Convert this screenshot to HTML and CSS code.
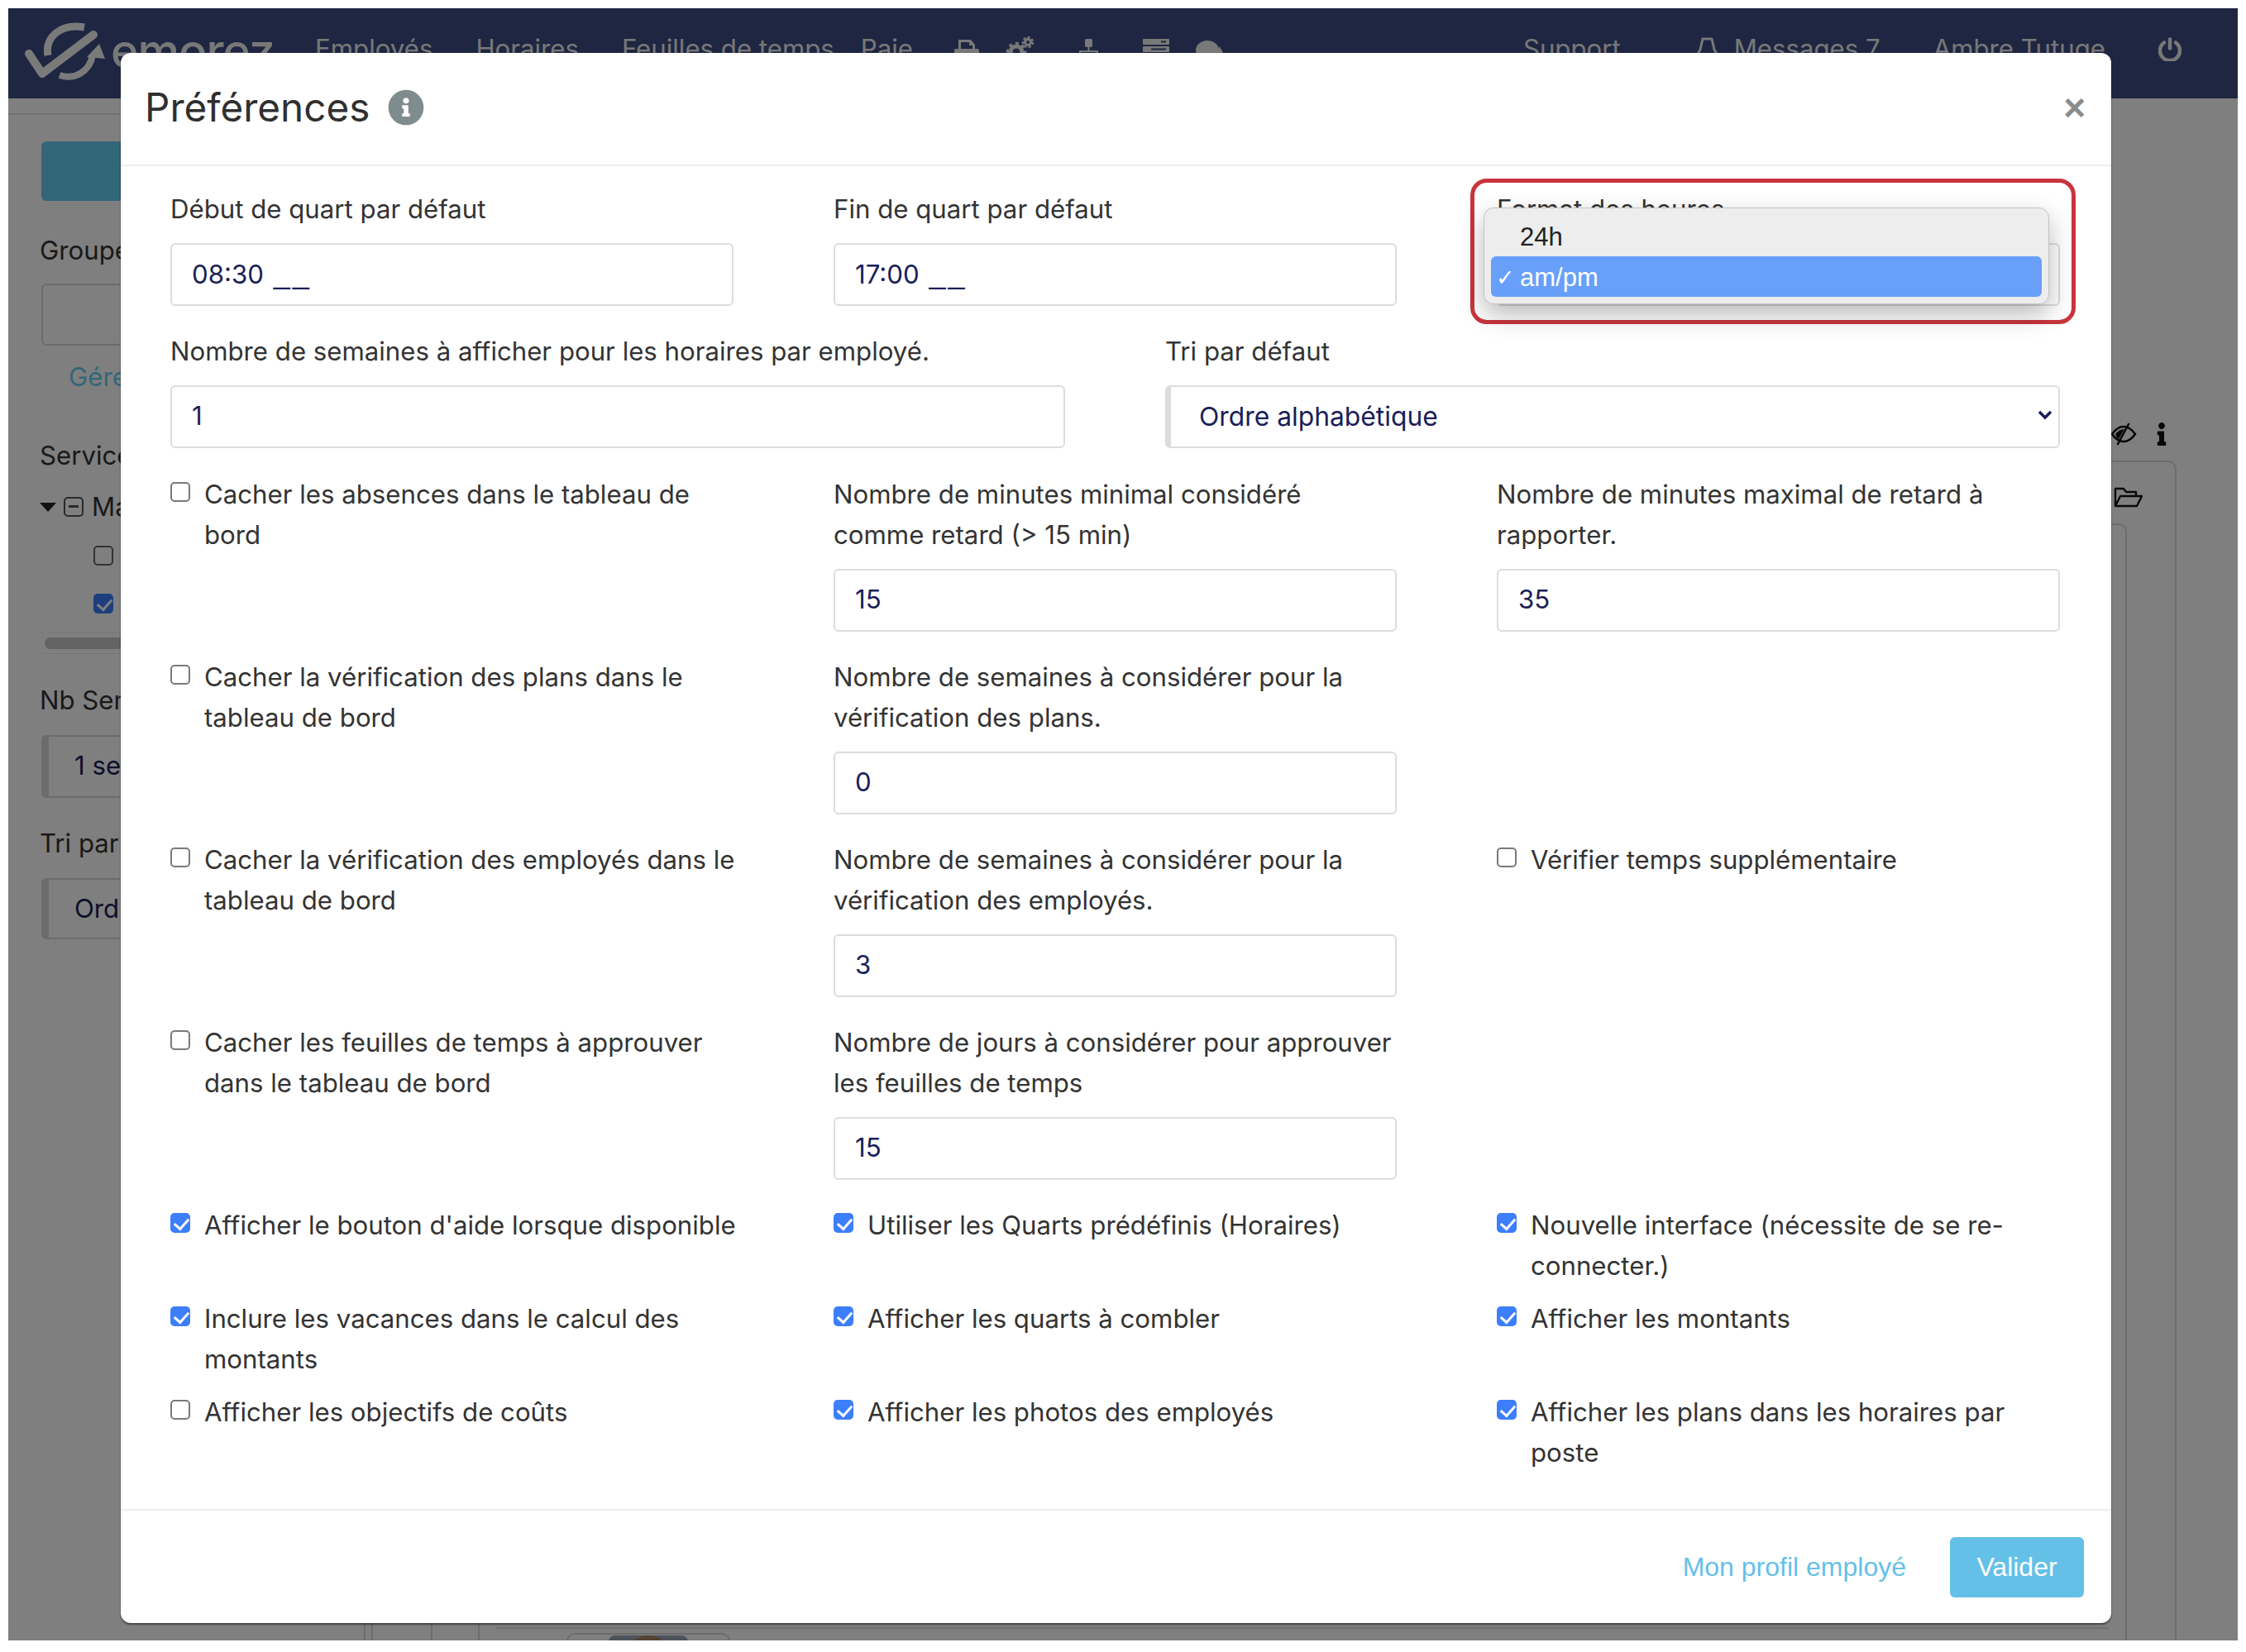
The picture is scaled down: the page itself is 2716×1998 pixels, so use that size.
FILE: index.html
```html
<!DOCTYPE html>
<html lang="fr">
<head>
<meta charset="utf-8">
<title>Préférences</title>
<link rel="stylesheet" href="styles.css">
</head>
<body>
<div class="app">
  <header class="navbar">
    <div class="brand">
      <svg class="logo" viewBox="0 0 100 74" fill="none" stroke="#f4f4f4" stroke-linecap="round" stroke-linejoin="round">
        <path d="M7 40 L23 64 L85 17" stroke-width="10"/>
        <path d="M30 42 C26 20 45 3 74 8" stroke-width="9" stroke-linecap="butt"/>
        <path d="M44 66 C62 72 80 62 84 42" stroke-width="8" stroke-linecap="butt"/>
        <path d="M77 44 L92 28 L99 46z" fill="#f4f4f4" stroke="none"/>
      </svg>
      <span class="brand-name">emorez</span>
    </div>
    <nav class="nav-main">
      <a class="nav-link">Employés</a>
      <a class="nav-link">Horaires</a>
      <a class="nav-link">Feuilles de temps</a>
      <a class="nav-link nav-paie">Paie</a>
      <span class="nav-icons">
        <svg class="ic-print" viewBox="0 0 30 28" fill="#f0f0f0"><path d="M5 12V1h15l5 6v5h-3V8h-4V4H8v8z"/><path d="M2 12h26a2 2 0 0 1 2 2v12H0V14a2 2 0 0 1 2-2z"/></svg>
        <svg class="ic-gears" viewBox="0 0 35 30" fill="none" stroke="#f0f0f0">
          <circle cx="13" cy="19" r="7" stroke-width="5"/><circle cx="13" cy="19" r="10.5" stroke-width="3.5" stroke-dasharray="4 4"/>
          <circle cx="27" cy="7" r="3.5" stroke-width="3"/><circle cx="27" cy="7" r="6" stroke-width="2.4" stroke-dasharray="3 2.4"/>
        </svg>
        <svg class="ic-site" viewBox="0 0 25 30" fill="#f0f0f0"><rect x="8" y="0" width="9" height="10" rx="2"/><rect x="11.5" y="10" width="2" height="5"/><rect x="2" y="14" width="21" height="2"/><rect x="1" y="14" width="2" height="12"/><rect x="22" y="14" width="2" height="12"/></svg>
        <svg class="ic-server" viewBox="0 0 32 30" fill="#f0f0f0"><path d="M1 0h30a1 1 0 0 1 1 1v5a1 1 0 0 1-1 1H1a1 1 0 0 1-1-1V1a1 1 0 0 1 1-1zm21 2.500v2h6v-2z" fill-rule="evenodd"/><path d="M1 9h30a1 1 0 0 1 1 1v5a1 1 0 0 1-1 1H1a1 1 0 0 1-1-1v-5a1 1 0 0 1 1-1zm9 2.500v2h18v-2z" fill-rule="evenodd"/></svg>
        <svg class="ic-chat" viewBox="0 0 33 30" fill="#f0f0f0"><ellipse cx="14" cy="13" rx="14" ry="12"/><path d="M28 8c3 3 5 7 5 10s-4 6-8 6z"/></svg>
      </span>
    </nav>
    <nav class="nav-user">
      <a class="nav-link">Support</a>
      <a class="nav-link nav-msg">
        <svg class="bell" viewBox="0 0 29 30" fill="none" stroke="#f0f0f0" stroke-width="3" stroke-linejoin="round"><path d="M9 2h11l3 13 4 7H2l4-7z"/><path d="M11 22c0 6 7 6 7 0"/></svg>Messages 7</a>
      <a class="nav-link">Ambre Tutuge</a>
      <svg class="power" viewBox="0 0 28 29" fill="none" stroke="#f0f0f0" stroke-width="4.500" stroke-linecap="round"><path d="M14 2.500v11"/><path d="M7 6.500a12 12 0 1 0 14 0"/></svg>
    </nav>
  </header>
  <div class="subbar"></div>
  <main class="main">
    <aside class="side">
      <button class="side-btn" type="button"></button>
      <div class="side-label side-label-first">Groupes</div>
      <div class="side-input"></div>
      <a class="side-link">Gérer</a>
      <div class="side-label side-label-serv">Services</div>
      <div class="tree-row">
        <span class="tree-caret"></span>
        <span class="tree-minus"></span>
        <span>Maison</span>
      </div>
      <div class="tree-row tree-child"><span class="tree-box"></span></div>
      <div class="tree-row tree-child"><span class="tree-box tree-box-on"></span></div>
      <div class="side-scroll"><span class="side-thumb"></span></div>
      <div class="side-label side-label-nb">Nb Semaines</div>
      <div class="side-select">1 semaine</div>
      <div class="side-label side-label-tri">Tri par</div>
      <div class="side-select side-select-last">Ordre</div>
    </aside>
    <section class="content">
      <div class="tools">
        <svg class="tool-eye" viewBox="0 0 32 28" fill="none" stroke="#111" stroke-width="2.600" stroke-linecap="round"><path d="M2 14C7 7 12 5 16 5s9 2 14 9c-5 7-10 9-14 9S7 21 2 14z"/><path d="M6 14c3-4 7-6 11-6L10 20c-2-1-3-3-4-6z" fill="#111" stroke="none"/><path d="M22 2 9 26"/></svg>
        <svg class="tool-info" viewBox="0 0 192 512" fill="#111"><path d="M20 424.229h20V279.771H20c-11.046 0-20-8.954-20-20V212c0-11.046 8.954-20 20-20h112c11.046 0 20 8.954 20 20v212.229h20c11.046 0 20 8.954 20 20V492c0 11.046-8.954 20-20 20H20c-11.046 0-20-8.954-20-20v-47.771c0-11.046 8.954-20 20-20zM96 0C56.235 0 24 32.235 24 72s32.235 72 72 72 72-32.235 72-72S135.764 0 96 0z"/></svg>
      </div>
      <div class="panel">
        <div class="panel-head">
          <svg class="folder" viewBox="0 0 36 26" fill="none" stroke="#111" stroke-width="2.400" stroke-linejoin="round"><path d="M3 24V3h10l3 4h12v5"/><path d="M3 24l6-12h26l-6 12z"/></svg>
        </div>
        <div class="panel-inner">
          <div class="cells">
            <span class="cell cell-a"></span>
            <span class="cell cell-b"></span>
            <div class="cell-main">
              <div class="table-rule"></div>
              <div class="emp-card"><span class="emp-photo"><span class="emp-hair"></span></span></div>
            </div>
          </div>
        </div>
      </div>
    </section>
  </main>

  <div class="backdrop"></div>

  <div class="modal">
    <div class="modal-head">
      <h1 class="modal-title">Préférences</h1>
      <svg class="title-info" viewBox="0 0 512 512" fill="#7f8c8d"><path d="M256 8C119.043 8 8 119.083 8 256c0 136.997 111.043 248 248 248s248-111.003 248-248C504 119.083 392.957 8 256 8zm0 110c23.196 0 42 18.804 42 42s-18.804 42-42 42-42-18.804-42-42 18.804-42 42-42zm56 254c0 6.627-5.373 12-12 12h-88c-6.627 0-12-5.373-12-12v-24c0-6.627 5.373-12 12-12h12v-64h-12c-6.627 0-12-5.373-12-12v-24c0-6.627 5.373-12 12-12h64c6.627 0 12 5.373 12 12v100h12c6.627 0 12 5.373 12 12v24z"/></svg>
      <span class="modal-close">×</span>
    </div>

    <div class="modal-body">
      <div class="row row-3">
        <div class="field"><label class="lbl">Début de quart par défaut</label><div class="inp">08:30 <span class="mask">__</span></div></div>
        <div class="field"><label class="lbl">Fin de quart par défaut</label><div class="inp">17:00 <span class="mask">__</span></div></div>
        <div class="field"><label class="lbl">Format des heures</label><div class="sel"></div></div>
      </div>
      <div class="row row-2">
        <div class="field"><label class="lbl">Nombre de semaines à afficher pour les horaires par employé.</label><input class="inp" value="1"></div>
        <div class="field"><label class="lbl">Tri par défaut</label>
          <div class="sel sel-bar">Ordre alphabétique
            <svg class="chev" viewBox="0 0 18 12" fill="none" stroke="#1a1e58" stroke-width="3.400"><path d="M2 2l7 7 7-7"/></svg>
          </div>
        </div>
      </div>
      <div class="row row-3">
        <label class="chk"><input type="checkbox"><span>Cacher les absences dans le tableau de bord</span></label>
        <div class="field"><label class="lbl">Nombre de minutes minimal considéré<br>comme retard (&gt; 15 min)</label><input class="inp" value="15"></div>
        <div class="field"><label class="lbl">Nombre de minutes maximal de retard à rapporter.</label><input class="inp" value="35"></div>
      </div>
      <div class="row row-3">
        <label class="chk"><input type="checkbox"><span>Cacher la vérification des plans dans le tableau de bord</span></label>
        <div class="field"><label class="lbl">Nombre de semaines à considérer pour la vérification des plans.</label><input class="inp" value="0"></div>
        <div></div>
      </div>
      <div class="row row-3">
        <label class="chk"><input type="checkbox"><span>Cacher la vérification des employés dans le tableau de bord</span></label>
        <div class="field"><label class="lbl">Nombre de semaines à considérer pour la vérification des employés.</label><input class="inp" value="3"></div>
        <label class="chk"><input type="checkbox"><span>Vérifier temps supplémentaire</span></label>
      </div>
      <div class="row row-3">
        <label class="chk"><input type="checkbox"><span>Cacher les feuilles de temps à approuver dans le tableau de bord</span></label>
        <div class="field"><label class="lbl">Nombre de jours à considérer pour approuver les feuilles de temps</label><input class="inp" value="15"></div>
        <div></div>
      </div>
      <div class="row row-3 row-tight">
        <label class="chk"><input type="checkbox" checked><span>Afficher le bouton d'aide lorsque disponible</span></label>
        <label class="chk"><input type="checkbox" checked><span>Utiliser les Quarts prédéfinis (Horaires)</span></label>
        <label class="chk"><input type="checkbox" checked><span>Nouvelle interface (nécessite de se re-connecter.)</span></label>
      </div>
      <div class="row row-3 row-tight">
        <label class="chk"><input type="checkbox" checked><span>Inclure les vacances dans le calcul des montants</span></label>
        <label class="chk"><input type="checkbox" checked><span>Afficher les quarts à combler</span></label>
        <label class="chk"><input type="checkbox" checked><span>Afficher les montants</span></label>
      </div>
      <div class="row row-3 row-last">
        <label class="chk"><input type="checkbox"><span>Afficher les objectifs de coûts</span></label>
        <label class="chk"><input type="checkbox" checked><span>Afficher les photos des employés</span></label>
        <label class="chk"><input type="checkbox" checked><span>Afficher les plans dans les horaires par poste</span></label>
      </div>
    </div>

    <div class="modal-foot">
      <a class="foot-link">Mon profil employé</a>
      <button class="foot-btn" type="button">Valider</button>
    </div>

    <div class="annot">
      <div class="menu">
        <div class="menu-item"><span class="menu-tick"></span>24h</div>
        <div class="menu-item menu-item-on"><span class="menu-tick">✓</span>am/pm</div>
      </div>
    </div>
  </div>
</div>
</body>
</html>
```

FILE: styles.css
```css
* { box-sizing: border-box; }
html, body { height: 100%; }
body {
  margin: 10px;
  background: #fff;
  font-family: Inter, "Noto Sans", sans-serif;
  font-size: 31.2px;
  line-height: 49px;
  color: #333;
  overflow: hidden;
}
.app {
  position: relative;
  width: 2696px;
  height: 1974px;
  overflow: hidden;
  background: #fff;
}

/* navbar */
.navbar {
  display: flex;
  align-items: flex-start;
  height: 109px;
  background: #3c4c84;
  color: #f0f0f0;
}
.brand { display: flex; align-items: flex-start; width: 371px; padding: 15px 0 0 18px; }
.logo { width: 100px; height: 74px; flex: none; }
.brand-name { font-size: 57px; line-height: 70px; font-weight: 500; margin: 2px 0 0 6px; letter-spacing: -1px; }
.nav-link { color: #f0f0f0; font-size: 31.2px; line-height: 49px; white-space: nowrap; }
.nav-main { display: flex; gap: 52px; padding-top: 25px; }
.nav-paie { margin-left: -20px; }
.nav-icons { display: flex; align-items: flex-start; margin-left: -2px; padding-top: 9px; }
.ic-print { width: 30px; height: 28px; margin-top: 3px; }
.ic-gears { width: 35px; height: 30px; margin-left: 32px; }
.ic-site { width: 25px; height: 30px; margin: 3px 0 0 53px; }
.ic-server { width: 32px; height: 30px; margin: 3px 0 0 53px; }
.ic-chat { width: 33px; height: 30px; margin: 4px 0 0 32px; }
.nav-user { display: flex; gap: 64px; padding-top: 25px; margin-left: auto; padding-right: 68px; }
.nav-msg { display: flex; align-items: center; gap: 18px; margin-left: 26px; }
.bell { width: 29px; height: 30px; }
.power { width: 28px; height: 29px; margin-top: 10px; }

.subbar { height: 20px; margin-right: 2000px; border-bottom: 2px solid #e6e6e6; }

/* behind the dialog */
.main { display: flex; height: 1845px; overflow: hidden; }
.side { width: 400px; flex: none; padding: 32px 0 0 40px; overflow: hidden; white-space: nowrap; }
.side-btn { display: block; width: 320px; height: 72px; border: 0; border-radius: 6px; background: #68ccf4; }
.side-label { height: 49px; margin-left: -2px; }
.side-label-first { margin-top: 36px; }
.side-label-serv { margin-top: 46px; }
.side-label-nb { margin-top: 32px; }
.side-label-tri { margin-top: 31px; }
.side-input { height: 75px; margin-top: 15px; border: 2px solid #d8d8d8; border-radius: 6px; }
.side-link { display: block; margin: 14px 0 0 33px; color: #68ccf4; }
.tree-row { display: flex; align-items: center; height: 58.5px; }
.side-label-serv + .tree-row { margin-top: 8px; }
.tree-child { padding-left: 63px; }
.tree-caret { width: 0; height: 0; margin: 0 9px 0 -2px; border: 10px solid transparent; border-top: 11px solid #222; border-bottom: 0; }
.tree-minus { position: relative; width: 24px; height: 24px; margin-right: 10px; border: 2px solid #555; border-radius: 5px; }
.tree-minus::after { content: ""; position: absolute; left: 4px; right: 4px; top: 8px; height: 3px; background: #555; }
.tree-box { position: relative; width: 24px; height: 24px; border: 2px solid #666; border-radius: 5px; background: #fff; }
.tree-box-on { background: #3d7efc; border-color: #3d7efc; }
.tree-box-on::after { content: ""; position: absolute; left: 6px; top: 1px; width: 8px; height: 14px; border: solid #fff; border-width: 0 3.5px 3.5px 0; transform: rotate(42deg); }
.side-scroll { height: 26px; margin-top: 5px; padding: 5px 4px; border: 1px solid #eee; border-width: 1px 0; }
.side-thumb { display: block; height: 14px; border-radius: 7px; background: #c6c6c6; }
.side-select { height: 76px; margin-top: 17px; padding-left: 31px; border: 2px solid #d8d8d8; border-left: 9px solid #d8d8d8; border-radius: 6px; color: #1a1e58; line-height: 70px; }
.side-select-last { height: 74px; }

.content { flex: 1; min-width: 0; padding: 362px 74px 0 30px; }
.tools { display: flex; justify-content: flex-end; align-items: center; gap: 24px; height: 48px; margin-right: 12px; }
.tool-eye { width: 32px; height: 28px; }
.tool-info { width: 12px; height: 28px; }
.panel { height: 1600px; margin-top: 8px; padding-right: 58px; border: 2px solid #d8d8d8; border-radius: 10px; }
.panel-head { display: flex; justify-content: flex-end; height: 74px; padding-top: 29px; margin-right: -19px; }
.folder { width: 36px; height: 26px; }
.panel-inner { height: 1500px; margin-left: 7px; border: 2px solid #d8d8d8; border-radius: 10px; padding-top: 1300px; }
.cells { display: flex; height: 80px; }
.cell { flex: none; border-right: 2px solid #d8d8d8; }
.cell-a { width: 72px; }
.cell-b { width: 57px; }
.cell-main { flex: 1; min-width: 0; padding-top: 33px; }
.table-rule { height: 2px; margin: 0 20px; background: #e0e0e0; }
.emp-card { width: 198px; height: 40px; margin: 5px 0 0 105px; padding: 1px 49px 0; border: 2px solid #d8d8d8; border-bottom: 0; border-radius: 10px 10px 0 0; }
.emp-photo { display: flex; justify-content: center; height: 30px; border-radius: 8px 8px 0 0; background: #9aa6b6; }
.emp-hair { width: 55px; height: 30px; border-radius: 28px 28px 0 0; background: #a88660; }

.backdrop { position: absolute; inset: 0; background: rgba(0, 0, 0, .5); }

/* dialog */
.modal {
  position: absolute;
  left: 136px;
  top: 54px;
  width: 2407px;
  background: #fff;
  border-radius: 12px;
  box-shadow: 0 2px 2px rgba(0, 0, 0, .45), 0 0 1px rgba(0, 0, 0, .5);
}
.modal-head { display: flex; align-items: center; height: 137px; padding: 0 0 3px 29px; border-bottom: 2px solid #eee; }
.modal-title { margin: 0; font-size: 47.6px; line-height: 60px; font-weight: 400; color: #2f2f2f; }
.title-info { width: 44px; height: 44px; margin-left: 22px; }
.modal-close { margin-left: auto; margin-right: 31px; font-size: 46px; line-height: 46px; font-weight: 700; color: #8a8a8a; font-family: "Liberation Sans", sans-serif; }
.modal-body { padding: 27px 62px 43px 60px; }
.row { display: grid; column-gap: 121px; margin-bottom: 30px; align-items: start; }
.row-3 { grid-template-columns: repeat(3, 1fr); }
.row-2 { grid-template-columns: repeat(2, 1fr); margin-bottom: 31px; }
.row-tight { margin-bottom: 14px; }
.row-last { margin-bottom: 0; }
.field { display: flex; flex-direction: column; }
.lbl { padding-top: 1px; margin-bottom: 16px; }
.inp, .sel {
  display: block;
  width: 100%;
  height: 76px;
  padding: 0 24px 2px;
  border: 2px solid #dcdcdc;
  border-radius: 6px;
  background: #fff;
  color: #1a1e58;
  font: inherit;
  line-height: 70px;
}
.mask { margin-left: 3px; font-family: "Liberation Sans", sans-serif; font-size: 36px; letter-spacing: 3px; }
.sel { position: relative; }
.sel-bar { padding-left: 34px; border-left: 7px solid #dcdcdc; font-size: 31.8px; line-height: 72px; }
.chev { position: absolute; right: 7px; top: 28px; width: 18px; height: 12px; }
.chk { display: flex; gap: 17px; align-items: flex-start; }
.chk span { padding-top: 1px; margin-right: -12px; }
.chk input {
  appearance: none;
  position: relative;
  flex: none;
  width: 24px;
  height: 24px;
  margin: 10px 0 0;
  border: 2px solid #7a7a7a;
  border-radius: 5px;
  background: #fff;
}
.chk input:checked { border-color: #3d7efc; background: #3d7efc; }
.chk input:checked::after {
  content: "";
  position: absolute;
  left: 6px;
  top: 1px;
  width: 8px;
  height: 14px;
  border: solid #fff;
  border-width: 0 3.5px 3.5px 0;
  transform: rotate(42deg);
}
.modal-foot { display: flex; justify-content: flex-end; align-items: center; gap: 53px; height: 138px; padding: 0 33px 0 0; border-top: 2px solid #eee; font-family: "Liberation Sans", Arial, sans-serif; font-size: 32px; }
.foot-link { color: #65c0e8; }
.foot-btn { width: 162px; height: 73px; border: 0; border-radius: 6px; background: #65c0e8; color: #fff; font: inherit; }

/* native-looking popup and its red annotation */
.annot {
  position: absolute;
  left: 1632px;
  top: 152px;
  width: 732px;
  height: 176px;
  padding: 30px 0 0 11px;
  border: 5px solid #c9353c;
  border-radius: 20px;
}
.menu {
  width: 684px;
  height: 117px;
  padding: 8px;
  background: #ededed;
  border: 1px solid #c4c4c4;
  border-radius: 12px;
  box-shadow: 0 12px 30px rgba(0, 0, 0, .28);
  font-family: "Liberation Sans", Arial, sans-serif;
  font-size: 31px;
  color: #222;
}
.menu-item { display: flex; align-items: center; height: 50px; padding-top: 2px; border-radius: 6px; }
.menu-item-on { height: 49px; background: #689ffa; color: #fff; }
.menu-tick { width: 35px; padding-left: 6px; font-size: 27px; font-family: "DejaVu Sans", sans-serif; }
```
